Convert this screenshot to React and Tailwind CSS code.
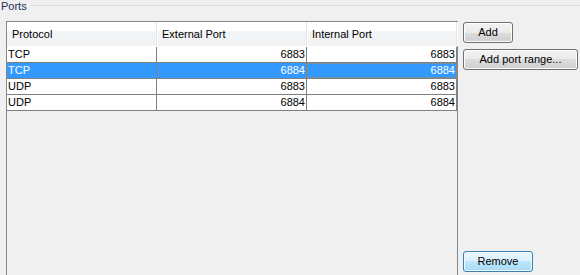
import React from "react";

const rows = [
  { proto: "TCP", ext: "6883", int: "6883" },
  { proto: "TCP", ext: "6884", int: "6884", selected: true },
  { proto: "UDP", ext: "6883", int: "6883" },
  { proto: "UDP", ext: "6884", int: "6884" },
];

const btn =
  "h-[21px] flex items-center justify-center rounded-[3px] border border-[#707070] bg-[linear-gradient(#f2f2f2_0%,#ebebeb_50%,#dddddd_50%,#cfcfcf_100%)] shadow-[inset_0_0_0_1px_#fcfcfc] text-black";

const App = () => {
  return (
    <div className="w-[580px] h-[275px] overflow-hidden bg-[#f0f0f0] flex flex-col font-['Liberation_Sans',Arial,sans-serif] text-[11px] leading-none text-black">
      {/* group title */}
      <div className="h-[21px] flex items-start">
        <span className="pl-[1px] pt-[1px] text-[#1d2f5c] leading-[11px]">Ports</span>
        <div className="flex-1 ml-[3px] mt-[5px] h-[2px] border-t border-[#d5dfe5] border-b-white" />
      </div>

      <div className="flex h-[254px]">
        {/* table */}
        <div className="ml-[6px] w-[452px] h-[262px] shrink-0 border border-[#828790] bg-[#f0f0f0]">
          <div className="flex h-[25px] bg-[linear-gradient(#ffffff_0%,#ffffff_35%,#f3f4f6_40%,#f1f2f4_100%)] border-b border-white">
            {["Protocol", "External Port", "Internal Port"].map((h) => (
              <div
                key={h}
                className="w-[150px] flex items-center pl-[5px] border-r border-[#e3e6ea] shadow-[1px_0_0_#fff]"
              >
                {h}
              </div>
            ))}
          </div>
          {rows.map((r, i) => (
            <div
              key={i}
              className={`flex h-[16px] border-b border-[#808080] ${
                r.selected ? "bg-[#3399ff] text-white" : "bg-white"
              }`}
            >
              <div className="w-[150px] border-r border-[#808080] flex items-center pl-[1px]">
                {r.proto}
              </div>
              <div className="w-[150px] border-r border-[#808080] flex items-center justify-end pr-[1px]">
                {r.ext}
              </div>
              <div
                className={`w-[150px] border-r border-[#808080] flex items-center justify-end pr-[1px] ${
                  r.selected ? "outline-1 outline-dotted outline-[#b08a4a] -outline-offset-1" : ""
                }`}
              >
                {r.int}
              </div>
            </div>
          ))}
        </div>

        {/* buttons */}
        <div className="ml-[5px] pt-[1px] pb-[3px] flex flex-col gap-[6px]">
          <div className={`${btn} w-[50px]`}>Add</div>
          <div className={`${btn} w-[115px]`}>Add port range...</div>
          <div className="mt-auto w-[70px] h-[21px] flex items-center justify-center rounded-[3px] border border-[#3c7fb1] bg-[linear-gradient(#eaf6fd_0%,#d9f0fc_50%,#bee6fd_50%,#a7d9f5_100%)] shadow-[inset_0_0_0_1px_#f0f9fe]">
            Remove
          </div>
        </div>
      </div>
    </div>
  );
};

export default App;
